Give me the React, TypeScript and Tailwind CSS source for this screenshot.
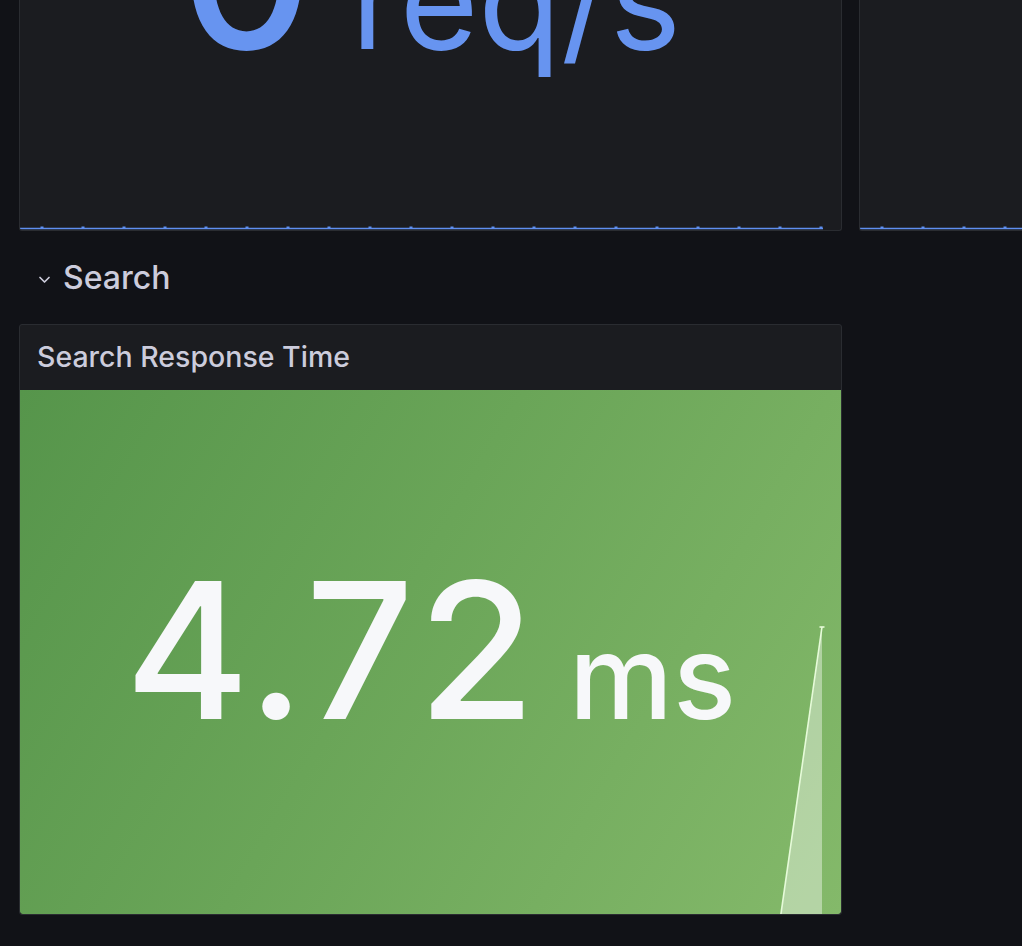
import React from 'react'

const ticksMain = Array.from({ length: 20 }, (_, i) => 22 + i * 41)
const ticksSide = Array.from({ length: 4 }, (_, i) => 22 + i * 41)

function BlueSpark({ width, ticks }: { width: number; ticks: number[] }) {
  return (
    <svg className="absolute bottom-0 left-0" width={width} height={6} viewBox={`0 0 ${width} 6`}>
      <line x1={0} y1={4.5} x2={width} y2={4.5} stroke="#5f8ff0" strokeWidth={1.5} />
      {ticks.map((x) => (
        <rect key={x} x={x - 1.5} y={2.5} width={3} height={2} fill="#5f8ff0" />
      ))}
    </svg>
  )
}

export default function App() {
  return (
    <div className="h-[946px] w-full overflow-hidden bg-[#111217] font-['Inter','Noto_Sans',sans-serif]">
      {/* Top row (cut at top) */}
      <div className="flex gap-[17px] pl-[19px]">
        <div className="relative h-[231px] w-[823px] shrink-0 overflow-hidden rounded-b-[3px] border border-t-0 border-[#2a2c31] bg-[#1b1c20]">
          <div className="mt-[-129px] flex items-baseline justify-center gap-[38px] leading-none text-[#6794f0]">
            <span className="text-[206px] font-medium">0</span>
            <span className="text-[135px] font-normal">req/s</span>
          </div>
          <BlueSpark width={803} ticks={ticksMain} />
        </div>
        <div className="relative h-[231px] flex-1 overflow-hidden rounded-bl-[3px] border border-t-0 border-r-0 border-[#2a2c31] bg-[#1b1c20]">
          <BlueSpark width={200} ticks={ticksSide} />
        </div>
      </div>

      {/* Row header */}
      <div className="flex h-[93px] items-center gap-[11px] pl-[37px]">
        <svg width="15" height="11" viewBox="0 0 15 11" className="mt-[4px]">
          <path d="M3 3.5 L7.5 8 L12 3.5" fill="none" stroke="#ccccdc" strokeWidth={1.7} strokeLinecap="round" strokeLinejoin="round" />
        </svg>
        <span className="text-[32px] font-medium text-[#ccccdc]">Search</span>
      </div>

      {/* Stat panel */}
      <div className="ml-[19px] flex h-[591px] w-[823px] flex-col overflow-hidden rounded-[3px] border border-[#2a2c31] bg-[#1b1c20]">
        <div className="flex h-[65px] shrink-0 items-center px-[17px]">
          <span className="text-[28.5px] font-medium text-[#ccccdc]">Search Response Time</span>
        </div>
        <div className="relative flex flex-1 items-center justify-center rounded-b-[3px] bg-[linear-gradient(120deg,#56954b_0%,#6aa558_45%,#84b96a_100%)]">
          <div className="mt-[-4px] flex items-baseline gap-[30px] leading-none text-[#f7f8fa]">
            <span className="text-[190px] font-medium tracking-[4px]">4.72</span>
            <span className="text-[117px] font-medium">ms</span>
          </div>
          <svg className="absolute inset-0" width="100%" height="100%" viewBox="0 0 820 524" preserveAspectRatio="none">
            <polygon points="760,524 801,237 801,524" fill="rgba(255,255,255,0.4)" />
            <line x1={760} y1={524} x2={801} y2={237} stroke="#e6fbd9" strokeWidth={1.6} />
            <line x1={798.5} y1={237} x2={803.5} y2={237} stroke="#e6fbd9" strokeWidth={1.6} />
          </svg>
        </div>
      </div>
    </div>
  )
}
